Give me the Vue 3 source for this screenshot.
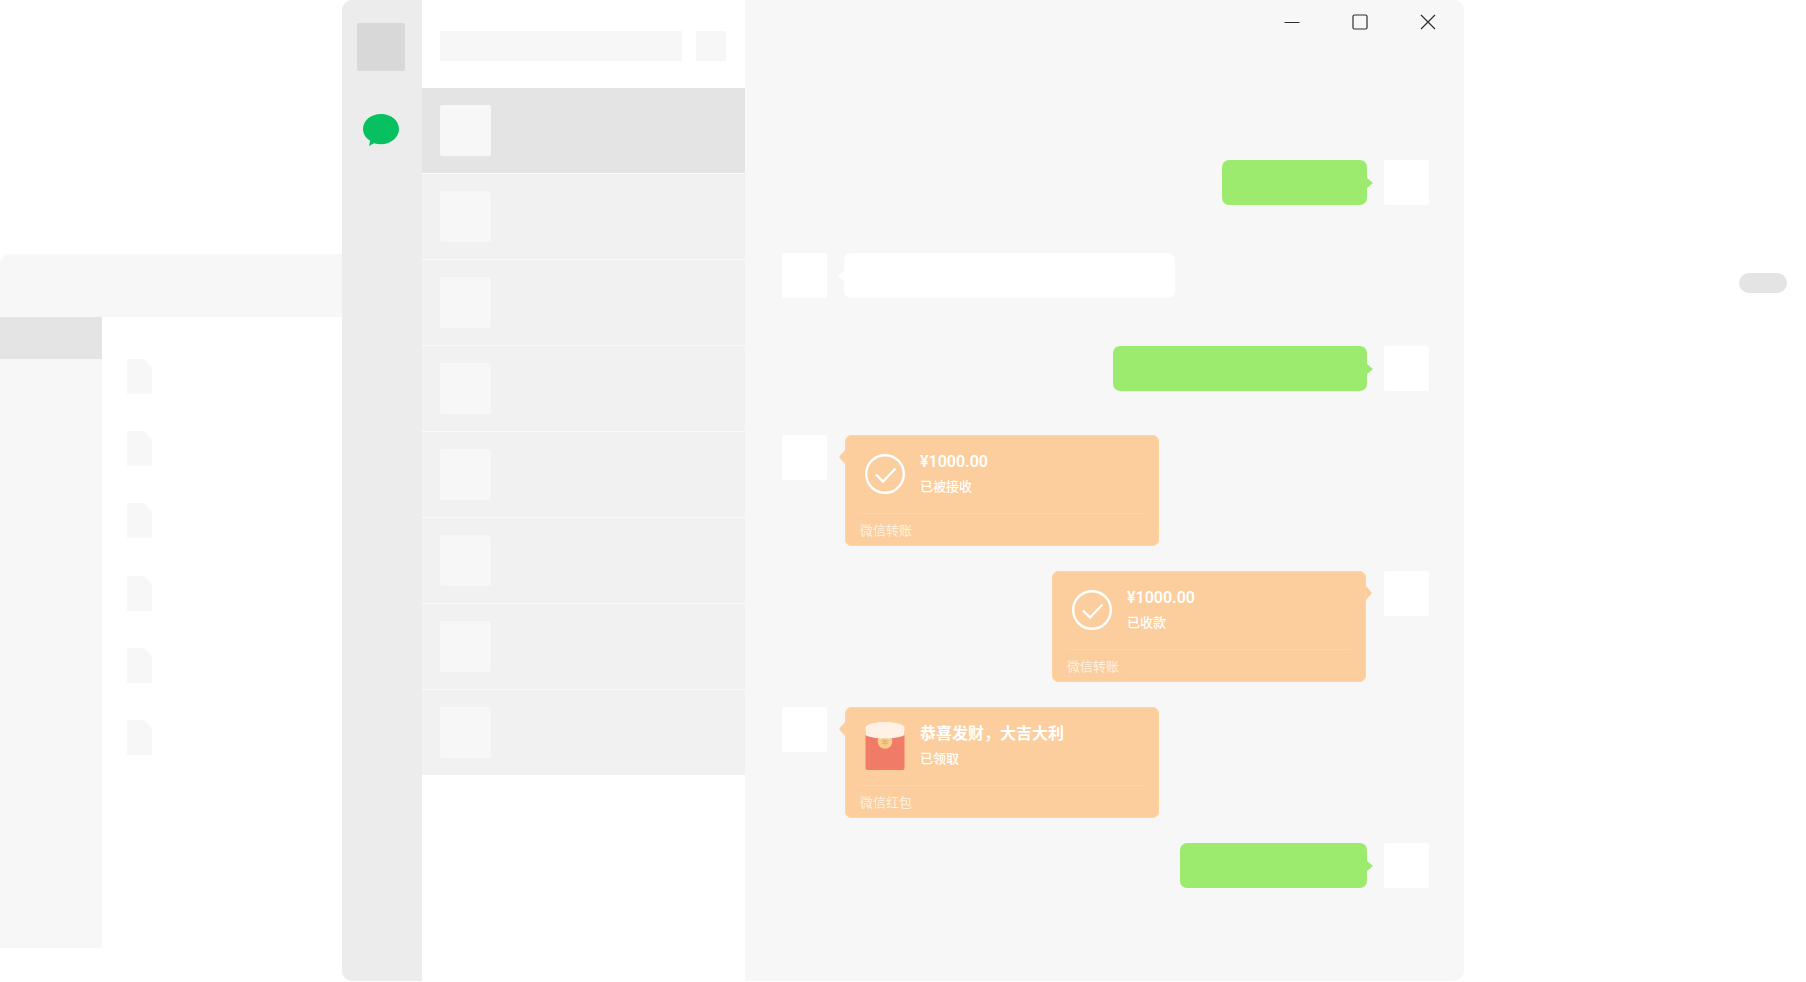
<template>
  <main class="desktop">
    <section class="files-window">
      <div class="files-left">
        <div class="files-header"></div>
        <div class="files-body">
          <nav class="files-nav">
            <div class="files-nav-item"></div>
          </nav>
          <div class="files-list">
            <svg v-for="n in 6" :key="n" class="file" viewBox="0 0 25 35">
              <path d="M0 0h17l8 9v26H0z" fill="#f7f7f7" />
            </svg>
          </div>
        </div>
      </div>
      <div class="files-right">
        <button class="pill" type="button" aria-label="操作"></button>
      </div>
    </section>

    <section class="chat-window">
      <nav class="rail">
        <div class="rail-avatar"></div>
        <button class="rail-chat" type="button" aria-label="聊天">
          <svg width="36" height="32" viewBox="0 0 36 32">
            <path
              d="M18 0C8 0 0 6.600 0 15c0 4.600 2.600 8.800 6.900 11.600c.3.700-.2 2.900-.9 5.400l5-2.700c2.200.6 4.600.9 7 .9c10 0 18-6.800 18-15.200S28 0 18 0z"
              fill="#07c160"
            />
          </svg>
        </button>
      </nav>

      <aside class="contacts">
        <div class="search">
          <input type="text" aria-label="搜索" />
          <button type="button" aria-label="添加"></button>
        </div>
        <ul>
          <li v-for="n in 8" :key="n" :class="{ active: n === 1 }">
            <div class="contact-avatar"></div>
          </li>
        </ul>
      </aside>

      <div class="chat">
        <div class="controls">
          <button type="button" aria-label="最小化">
            <svg width="16" height="16" viewBox="0 0 16 16">
              <path d="M0.500 8.500h15" />
            </svg>
          </button>
          <button type="button" aria-label="最大化">
            <svg width="16" height="16" viewBox="0 0 16 16">
              <rect x="1" y="1" width="14" height="14" rx="1.500" />
            </svg>
          </button>
          <button type="button" aria-label="关闭">
            <svg width="16" height="16" viewBox="0 0 16 16">
              <path d="M1 1l14 14M15 1L1 15" />
            </svg>
          </button>
        </div>

        <div class="messages">
          <div v-for="(group, g) in groups" :key="g" :class="['group', group.kind]">
            <div
              v-for="(msg, i) in group.items"
              :key="i"
              :class="['message', { mine: msg.mine }]"
            >
              <div class="avatar"></div>
              <div v-if="msg.width" class="bubble" :style="{ width: msg.width + 'px' }"></div>
              <article v-else class="card">
                <div class="card-body">
                  <svg v-if="msg.icon === 'check'" class="card-icon" viewBox="0 0 40 48">
                    <circle cx="20" cy="24" r="18.800" fill="none" stroke="#fff" stroke-width="2.400" />
                    <path
                      d="M11 24.500l7 7L30.500 18.500"
                      fill="none"
                      stroke="#fff"
                      stroke-width="2.400"
                    />
                  </svg>
                  <svg v-else class="card-icon" viewBox="0 0 40 48">
                    <rect x="0.500" y="8" width="39" height="40" rx="2" fill="#f07c67" />
                    <circle cx="20" cy="19.500" r="7.300" fill="#f7cd8b" />
                    <path
                      d="M17.500 16l2.500 3l2.500-3M20 19v4.500M17 19.300h6M17 21.300h6"
                      fill="none"
                      stroke="#e9ae6a"
                      stroke-width="1"
                    />
                    <path
                      d="M0.500 5C3 1.800 11 0 20 0s17 1.800 19.500 5v8c-3 2-11 3.500-19.500 3.500S3.500 15 0.500 13z"
                      fill="#fff1e3"
                    />
                  </svg>
                  <div>
                    <h3>{{ msg.title }}</h3>
                    <p>{{ msg.status }}</p>
                  </div>
                </div>
                <footer>{{ msg.footer }}</footer>
              </article>
            </div>
          </div>
        </div>
      </div>
    </section>
  </main>
</template>

<script setup>
import { ref } from 'vue'

const groups = ref([
  {
    kind: 'plain',
    items: [
      { mine: true, width: 145 },
      { mine: false, width: 331 },
      { mine: true, width: 254 },
    ],
  },
  {
    kind: 'money',
    items: [
      {
        mine: false,
        icon: 'check',
        title: '¥1000.00',
        status: '已被接收',
        footer: '微信转账',
      },
      {
        mine: true,
        icon: 'check',
        title: '¥1000.00',
        status: '已收款',
        footer: '微信转账',
      },
      {
        mine: false,
        icon: 'packet',
        title: '恭喜发财，大吉大利',
        status: '已领取',
        footer: '微信红包',
      },
      { mine: true, width: 187 },
    ],
  },
])
</script>

<style>
body {
  background-color: #fff;
}
</style>

<style scoped>
* {
  margin: 0;
  padding: 0;
  box-sizing: border-box;
  font-family: "Noto Sans CJK SC", sans-serif;
}
button,
input {
  border: none;
  outline: none;
  background: none;
}
button {
  cursor: pointer;
}
svg {
  display: block;
}
.desktop {
  position: relative;
  min-height: 100vh;
  padding: 0 342px;
}

/* file manager behind the chat */
.files-window {
  position: absolute;
  top: 254px;
  left: 0;
  right: 0;
  bottom: 34px;
  display: flex;
}
.files-left {
  flex: 1;
  display: flex;
  flex-direction: column;
}
.files-header {
  height: 63px;
  background-color: #f7f7f7;
  border-top-left-radius: 10px;
}
.files-body {
  flex: 1;
  display: flex;
}
.files-nav {
  width: 102px;
  background-color: #f7f7f7;
}
.files-nav-item {
  height: 42px;
  background-color: #e4e4e4;
}
.files-list {
  display: flex;
  flex-direction: column;
  justify-content: space-between;
  padding: 42px 25px 193px;
}
.file {
  width: 25px;
  height: 35px;
}
.files-right {
  flex: 1;
  display: flex;
  justify-content: flex-end;
  align-items: flex-start;
  padding: 19px;
}
.pill {
  width: 48px;
  height: 20px;
  border-radius: 10px;
  background-color: #e4e4e4;
}

/* chat window */
.chat-window {
  position: relative;
  display: flex;
  min-height: calc(100vh - 1px);
  border-radius: 10px;
  overflow: hidden;
  background-color: #fff;
}
.rail {
  width: 80px;
  flex-shrink: 0;
  display: flex;
  flex-direction: column;
  align-items: center;
  gap: 43px;
  padding: 23px 2px 0 0;
  background-color: #ececec;
}
.rail-avatar {
  width: 48px;
  height: 48px;
  border-radius: 2px;
  background-color: #d8d8d8;
}
.contacts {
  width: 323px;
  flex-shrink: 0;
}
.search {
  display: flex;
  gap: 14px;
  height: 88px;
  padding: 31px 19px 27px 18px;
}
.search input {
  flex: 1;
  min-width: 0;
  background-color: #f7f7f7;
}
.search button {
  width: 30px;
  background-color: #f7f7f7;
}
.contacts ul {
  display: flex;
  flex-direction: column;
  gap: 1px;
  list-style: none;
  background-color: #fafafa;
}
.contacts li {
  padding: 17px 18px;
  background-color: #f1f1f1;
}
.contacts li.active {
  background-color: #e4e4e4;
}
.contact-avatar {
  width: 51px;
  height: 51px;
  border-radius: 2px;
  background-color: #f7f7f7;
}
.chat {
  flex: 1;
  min-width: 0;
  background-color: #f7f7f7;
}
.controls {
  display: flex;
  justify-content: flex-end;
  padding-right: 2px;
}
.controls button {
  display: flex;
  justify-content: center;
  align-items: center;
  width: 68px;
  height: 44px;
}
.controls svg {
  fill: none;
  stroke: #2c2c2c;
  stroke-width: 1.2;
}
.messages {
  display: flex;
  flex-direction: column;
  gap: 44px;
  padding: 116px 35px 44px 37px;
}
.group {
  display: flex;
  flex-direction: column;
}
.group.plain {
  gap: 48px;
}
.group.money {
  gap: 25px;
}
.message {
  display: flex;
  align-items: flex-start;
  gap: 17px;
}
.message.mine {
  flex-direction: row-reverse;
}
.avatar {
  width: 45px;
  height: 45px;
  flex-shrink: 0;
  border-radius: 2px;
  background-color: #fff;
}
.bubble,
.card {
  position: relative;
  border-radius: 7px;
}
.bubble {
  height: 45px;
  background-color: #fff;
}
.mine .bubble {
  background-color: #9ceb6e;
}
.bubble::before,
.card::before {
  content: '';
  position: absolute;
  right: 100%;
  background-color: inherit;
  clip-path: polygon(0 50%, 100% 0, 100% 100%);
}
.bubble::before {
  top: 18px;
  width: 6px;
  height: 10px;
}
.card::before {
  top: 15px;
  width: 6px;
  height: 14px;
}
.mine .bubble::before,
.mine .card::before {
  right: auto;
  left: 100%;
  clip-path: polygon(0 0, 100% 50%, 0 100%);
}
.card {
  width: 314px;
  margin: 0 1px;
  background-color: #fccd9d;
  box-shadow: inset 0 0 0 1px #ffd3a0;
  color: #fff;
}
.card-body {
  display: flex;
  align-items: center;
  gap: 15px;
  height: 79px;
  margin: 0 15px;
  padding-left: 5px;
  border-bottom: 1px solid #fdd4a8;
}
.card-icon {
  width: 40px;
  height: 48px;
}
.card h3 {
  font-family: Roboto, "Noto Sans CJK SC", sans-serif;
  font-size: 16px;
  line-height: 24px;
  font-weight: 600;
}
.card p {
  font-size: 13px;
  line-height: 24px;
  font-weight: 500;
}
.card footer {
  padding: 0 15px;
  font-size: 13px;
  line-height: 32px;
  color: #fff1e0;
}

@media (max-width: 1400px) {
  .desktop {
    padding: 0 24px;
  }
}
</style>
